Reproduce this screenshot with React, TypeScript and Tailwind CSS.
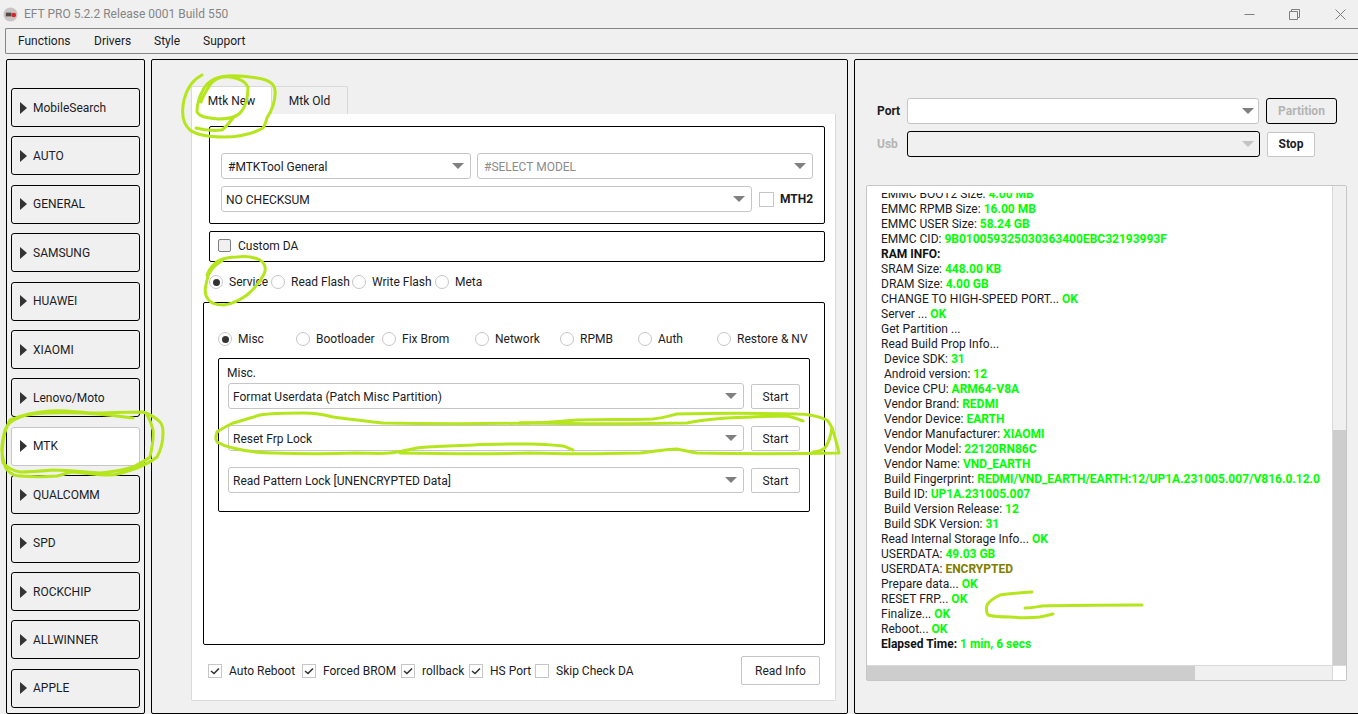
const sideItems = ['MobileSearch', 'AUTO', 'GENERAL', 'SAMSUNG', 'HUAWEI', 'XIAOMI', 'Lenovo/Moto', 'MTK', 'QUALCOMM', 'SPD', 'ROCKCHIP', 'ALLWINNER', 'APPLE']

type LogLine = { label: string; value?: string; bold?: boolean; indent?: boolean; warn?: boolean }

const logLines: LogLine[] = [
  { label: 'EMMC RPMB Size:', value: '16.00 MB' },
  { label: 'EMMC USER Size:', value: '58.24 GB' },
  { label: 'EMMC CID:', value: '9B010059325030363400EBC32193993F' },
  { label: 'RAM INFO:', bold: true },
  { label: 'SRAM Size:', value: '448.00 KB' },
  { label: 'DRAM Size:', value: '4.00 GB' },
  { label: 'CHANGE TO HIGH-SPEED PORT...', value: 'OK' },
  { label: 'Server ...', value: 'OK' },
  { label: 'Get Partition ...' },
  { label: 'Read Build Prop Info...' },
  { label: 'Device SDK:', value: '31', indent: true },
  { label: 'Android version:', value: '12', indent: true },
  { label: 'Device CPU:', value: 'ARM64-V8A', indent: true },
  { label: 'Vendor Brand:', value: 'REDMI', indent: true },
  { label: 'Vendor Device:', value: 'EARTH', indent: true },
  { label: 'Vendor Manufacturer:', value: 'XIAOMI', indent: true },
  { label: 'Vendor Model:', value: '22120RN86C', indent: true },
  { label: 'Vendor Name:', value: 'VND_EARTH', indent: true },
  { label: 'Build Fingerprint:', value: 'REDMI/VND_EARTH/EARTH:12/UP1A.231005.007/V816.0.12.0.TGKMIXM', indent: true },
  { label: 'Build ID:', value: 'UP1A.231005.007', indent: true },
  { label: 'Build Version Release:', value: '12', indent: true },
  { label: 'Build SDK Version:', value: '31', indent: true },
  { label: 'Read Internal Storage Info...', value: 'OK' },
  { label: 'USERDATA:', value: '49.03 GB' },
  { label: 'USERDATA:', value: 'ENCRYPTED', warn: true },
  { label: 'Prepare data...', value: 'OK' },
  { label: 'RESET FRP...', value: 'OK' },
  { label: 'Finalize...', value: 'OK' },
  { label: 'Reboot...', value: 'OK' },
  { label: 'Elapsed Time:', value: '1 min, 6 secs', bold: true },
]

function Arrow({ light }: { light?: boolean }) {
  return (
    <svg width="12" height="6" viewBox="0 0 12 6" className="shrink-0">
      <path d="M0 0H12L6 6Z" fill={light ? '#c4c4c4' : '#808080'} />
    </svg>
  )
}

function Combo({ text, width, pad = 'pl-[4px]', muted }: { text?: string; width: string; pad?: string; muted?: boolean }) {
  return (
    <div className={`${width} ${pad} h-[26px] shrink-0 flex items-center justify-between pr-[6px] bg-white border border-[#c6c6c6] rounded-[3px]`}>
      <span className={muted ? 'pt-[2px] text-[#8c8c8c]' : 'pt-[2px]'}>{text}</span>
      <Arrow />
    </div>
  )
}

function Radio({ label, width, checked }: { label: string; width: string; checked?: boolean }) {
  return (
    <div className={`${width} shrink-0 flex items-center gap-[6px]`}>
      <span className="w-[14px] h-[14px] rounded-full border border-[#c6c6c6] bg-white flex items-center justify-center">
        {checked && <span className="w-[7px] h-[7px] rounded-full bg-[#333333]" />}
      </span>
      <span className="whitespace-nowrap">{label}</span>
    </div>
  )
}

function Check({ label, width, checked }: { label: string; width: string; checked?: boolean }) {
  return (
    <div className={`${width} shrink-0 flex items-center gap-[7px]`}>
      <span className="w-[14px] h-[14px] border border-[#c6c6c6] bg-white flex items-center justify-center">
        {checked && (
          <svg width="10" height="8" viewBox="0 0 10 8">
            <path d="M1 4L4 6.5L9 1.5" fill="none" stroke="#333333" strokeWidth="1.6" />
          </svg>
        )}
      </span>
      <span className="whitespace-nowrap">{label}</span>
    </div>
  )
}

function StartRow({ text }: { text: string }) {
  return (
    <div className="flex items-center gap-[7px]">
      <Combo text={text} width="w-[516px]" />
      <button className="w-[49px] h-[25px] pt-[1px] bg-white border border-[#c6c6c6] rounded-[2px]">Start</button>
    </div>
  )
}

function Scribbles() {
  return (
    <svg width="1358" height="714" viewBox="0 0 1358 714" className="absolute inset-0 pointer-events-none">
      <g fill="none" stroke="#b5e61d" strokeWidth="3" strokeLinecap="round" strokeLinejoin="round">
        <path d="M202 75C192 80 187 88 184 100C181 114 183 124 190 130C198 136 210 137 224 137C238 137 252 134 263 128C266 124 266 120 267 118C272 110 276 100 275 90C274 82 265 79 257 78C245 76 236 75 227 76C215 77 207 82 203 90C199 97 197 105 197 112C200 117 207 118 218 119C228 119 236 118 241 112C246 106 248 96 248 87C245 80 238 78 230 77C222 76 215 78 210 85C206 91 203 96 201 102" />
        <path d="M233 118C230 122 227 126 222 130C212 131 203 130 196 128" />
        <path d="M223 260C213 266 208 272 207 280C205 288 204 294 208 299C211 304 217 305 224 305C232 304 240 300 247 295C254 289 260 282 264 274C267 268 264 262 260 260C252 256 244 256 237 257C229 257 222 259 218 261C213 264 209 270 207 275" />
        <path d="M133 418C105 414 78 412 50 413C38 413 28 414 20 417C12 420 7 424 5 430C3 438 1 445 2 452C3 460 4 466 7 470C11 474 15 476 20 476C32 477 45 477 57 476C63 475 68 472 73 472C85 473 98 475 110 475C119 475 128 471 137 468C144 465 151 462 157 457C161 450 163 441 163 433C163 428 162 424 160 422C155 417 149 414 143 412C125 412 108 413 90 413C76 412 63 410 50 411C36 412 22 415 10 420C6 428 3 436 3 443C2 450 2 458 3 463C8 468 14 471 20 472C31 472 42 471 53 470C69 470 84 472 100 473C112 472 123 470 133 467C139 464 145 461 150 457C152 448 154 439 153 430C152 425 150 420 147 415" />
        <path d="M530 423C480 424 432 424 383 423C365 421 349 419 333 417C322 414 313 413 303 413C288 413 273 413 260 415C250 418 241 421 233 423C227 426 221 429 217 432C216 435 215 439 217 442C222 445 227 447 233 448C245 451 258 453 273 453C300 454 330 454 357 453C370 453 380 454 390 453C400 452 408 450 417 448C435 446 454 446 473 445C492 444 511 444 530 444C542 444 553 445 563 446C567 447 570 449 573 450" />
        <path d="M400 453C460 454 495 454 530 453C560 454 600 454 640 453C653 452 665 449 677 449C683 450 690 452 697 453C745 454 792 454 839 453C837 445 835 436 832 428C830 424 829 422 827 420C818 416 808 414 797 414C757 413 717 413 677 414C669 416 662 418 653 419C627 420 602 419 577 420C558 422 539 423 520 423" />
        <path d="M520 423C580 424 640 424 687 423C700 420 713 419 727 418C747 417 767 416 787 416C793 417 798 419 803 421" />
        <path d="M832 428C831 435 829 442 825 448C821 451 817 452 813 452" />
        <path d="M1032 592C1021 593 1010 593 1000 595C994 598 989 601 987 605C986 609 986 612 988 615C995 617 1002 617 1010 617C1020 618 1030 618 1040 617C1045 616 1049 615 1053 614" />
        <path d="M1025 608C1031 608 1036 607 1042 606C1075 605 1108 605 1142 605" />
      </g>
    </svg>
  )
}

export default function App() {
  return (
    <div className="relative w-[1358px] h-[714px] overflow-hidden flex flex-col bg-[#f0f0f0] text-[12px] text-[#1c1c24] font-['Roboto',sans-serif]">
      <div className="h-[28px] shrink-0 flex items-center pl-[3px]">
        <svg width="15" height="15" viewBox="0 0 16 16" className="shrink-0">
          <circle cx="8" cy="8" r="7.5" fill="#c9c4c4" />
          <path d="M3 6H9V10H3Z" fill="#55484a" />
          <circle cx="11.5" cy="8.5" r="2.5" fill="#d8262c" />
        </svg>
        <span className="ml-[6px] text-[#858585]">EFT PRO 5.2.2 Release 0001 Build 550</span>
        <div className="ml-auto flex items-center">
          <svg width="11" height="11" viewBox="0 0 11 11" className="mr-[34px]">
            <path d="M0.5 5.5H10.5" stroke="#808080" />
          </svg>
          <svg width="11" height="11" viewBox="0 0 11 11" className="mr-[35px]">
            <path d="M0.5 2.5H8.5V10.5H0.5ZM2.5 2.5V0.5H10.5V8.5H8.5" fill="none" stroke="#808080" />
          </svg>
          <svg width="11" height="11" viewBox="0 0 11 11" className="mr-[12px]">
            <path d="M0.5 0.5L10.5 10.5M10.5 0.5L0.5 10.5" stroke="#808080" />
          </svg>
        </div>
      </div>

      <div className="ml-[5px] h-[26px] shrink-0 flex items-center border border-r-0 border-[#858585] rounded-l-[2px] pl-[12px]">
        <span className="w-[76px]">Functions</span>
        <span className="w-[60px]">Drivers</span>
        <span className="w-[49px]">Style</span>
        <span>Support</span>
      </div>

      <div className="flex flex-1 min-h-0 mt-[5px] pl-[6px] gap-[6px]">
        <div className="w-[139px] shrink-0 flex flex-col justify-between border border-black rounded-[2px] pt-[28px] pb-[5px] px-[4px]">
          {sideItems.map((item) => (
            <div
              key={item}
              className={
                item === 'MTK'
                  ? 'h-[39px] flex items-center pl-[8px] gap-[6px] rounded-[3px] bg-white border border-[#c6c6c6]'
                  : 'h-[39px] flex items-center pl-[8px] gap-[6px] rounded-[3px] border border-black'
              }
            >
              <svg width="7" height="12" viewBox="0 0 7 12" className="shrink-0">
                <path d="M0 0L7 6L0 12Z" fill="#333333" />
              </svg>
              <span>{item}</span>
            </div>
          ))}
        </div>

        <div className="w-[697px] shrink-0 flex flex-col border border-black rounded-[2px] pt-[26px] pl-[39px]">
          <div className="h-[28px] flex items-end">
            <div className="w-[81px] h-[28px] flex items-center justify-center bg-white border border-b-0 border-[#d9d9d9] rounded-t-[2px]">Mtk New</div>
            <div className="w-[76px] h-[28px] flex items-center justify-center bg-[#f0f0f0] border border-l-0 border-b-0 border-[#d9d9d9] rounded-tr-[2px]">Mtk Old</div>
          </div>
          <div className="w-[645px] h-[587px] bg-white border border-t-0 border-[#d9d9d9] rounded-b-[2px] pt-[12px] pl-[11px] pr-[10px]">
            <div className="ml-[6px] h-[98px] border border-black rounded-[2px] pt-[26px] pl-[11px]">
              <div className="flex gap-[6px]">
                <Combo text="#MTKTool General" width="w-[250px]" pad="pl-[6px]" />
                <Combo text="#SELECT MODEL" width="w-[336px]" pad="pl-[6px]" muted />
              </div>
              <div className="flex items-center mt-[7px]">
                <Combo text="NO CHECKSUM" width="w-[531px]" />
                <span className="ml-[7px] w-[15px] h-[15px] bg-white border border-[#c6c6c6]" />
                <span className="ml-[6px] font-bold">MTH2</span>
              </div>
            </div>
            <div className="ml-[6px] mt-[7px] h-[31px] flex items-center border border-black rounded-[2px] pl-[8px] pb-[2px] gap-[7px]">
              <span className="w-[13px] h-[13px] bg-[#f0f0f0] border border-[#808080] rounded-[2px]" />
              <span>Custom DA</span>
            </div>
            <div className="h-[40px] flex items-center pl-[6px]">
              <Radio label="Service" width="w-[62px]" checked />
              <Radio label="Read Flash" width="w-[81px]" />
              <Radio label="Write Flash" width="w-[83px]" />
              <Radio label="Meta" width="w-[60px]" />
            </div>
            <div className="h-[343px] border border-black rounded-[2px] pl-[14px]">
              <div className="h-[55px] pt-[17px] flex items-center">
                <Radio label="Misc" width="w-[78px]" checked />
                <Radio label="Bootloader" width="w-[86px]" />
                <Radio label="Fix Brom" width="w-[93px]" />
                <Radio label="Network" width="w-[85px]" />
                <Radio label="RPMB" width="w-[78px]" />
                <Radio label="Auth" width="w-[79px]" />
                <Radio label="Restore & NV" width="w-[94px]" />
              </div>
              <div className="w-[592px] h-[154px] border border-black rounded-[2px] pl-[9px] pt-[3px]">
                <div className="h-[21px] -ml-px flex items-center">Misc.</div>
                <div className="flex flex-col gap-[16px]">
                  <StartRow text="Format Userdata (Patch Misc Partition)" />
                  <StartRow text="Reset Frp Lock" />
                  <StartRow text="Read Pattern Lock [UNENCRYPTED Data]" />
                </div>
              </div>
            </div>
            <div className="h-[51px] flex items-center pl-[5px]">
              <Check label="Auto Reboot" width="w-[94px]" checked />
              <Check label="Forced BROM" width="w-[99px]" checked />
              <Check label="rollback" width="w-[68px]" checked />
              <Check label="HS Port" width="w-[66px]" checked />
              <Check label="Skip Check DA" width="w-[206px]" />
              <button className="w-[79px] h-[29px] bg-white border border-[#c6c6c6] rounded-[2px]">Read Info</button>
            </div>
          </div>
        </div>

        <div className="w-[520px] shrink-0 border border-black rounded-l-[2px] pl-[11px]">
          <div className="pl-[11px] pt-[38px] h-[125px]">
            <div className="flex items-center h-[26px]">
              <span className="w-[30px] font-bold">Port</span>
              <div className="w-[352px] h-[26px] flex items-center justify-end pr-[4px] bg-white border border-[#c6c6c6] rounded-[3px]">
                <Arrow />
              </div>
              <button className="ml-[7px] w-[71px] h-[26px] bg-[#f0f0f0] border border-black rounded-[3px] font-bold text-[#b4b4b4]">Partition</button>
            </div>
            <div className="flex items-center h-[26px] mt-[7px]">
              <span className="w-[30px] font-bold text-[#b4b4b4]">Usb</span>
              <div className="w-[353px] h-[26px] flex items-center justify-end pr-[5px] bg-[#f0f0f0] border border-black rounded-[3px]">
                <Arrow light />
              </div>
              <button className="ml-[7px] w-[48px] h-[25px] bg-white border border-[#c6c6c6] rounded-[2px] font-bold">Stop</button>
            </div>
          </div>
          <div className="w-[481px] h-[496px] flex flex-col bg-white border border-[#c6c6c6] rounded-[2px]">
            <div className="flex-1 min-h-0 flex">
              <div className="flex-1 min-w-0 pt-[7px]">
                <div className="h-full overflow-hidden pl-[14px] mr-[11px] leading-[15px] whitespace-nowrap">
                  <div className="-mt-[6px]">
                    EMMC BOOT2 Size: <span className="font-bold text-[#00ff00]">4.00 MB</span>
                  </div>
                  {logLines.map((line, i) => (
                    <div key={i} className={line.indent ? 'pl-[3px]' : ''}>
                      <span className={line.bold ? 'font-bold text-[#111111]' : ''}>{line.label}</span>
                      {line.value && (
                        <span className={line.warn ? 'font-bold text-[#808000]' : 'font-bold text-[#00ff00]'}> {line.value}</span>
                      )}
                    </div>
                  ))}
                </div>
              </div>
              <div className="w-[14px] shrink-0 flex flex-col justify-end bg-[#f0f0f0] border-l border-[#d9d9d9]">
                <div className="h-[235px] bg-[#cdcdcd]" />
              </div>
            </div>
            <div className="h-[15px] shrink-0 flex border-t border-[#d9d9d9]">
              <div className="flex-1 bg-[#f0f0f0]">
                <div className="w-[328px] h-full bg-[#cdcdcd]" />
              </div>
              <div className="w-[14px] bg-white border-l border-[#d9d9d9]" />
            </div>
          </div>
        </div>
      </div>

      <Scribbles />
    </div>
  )
}
